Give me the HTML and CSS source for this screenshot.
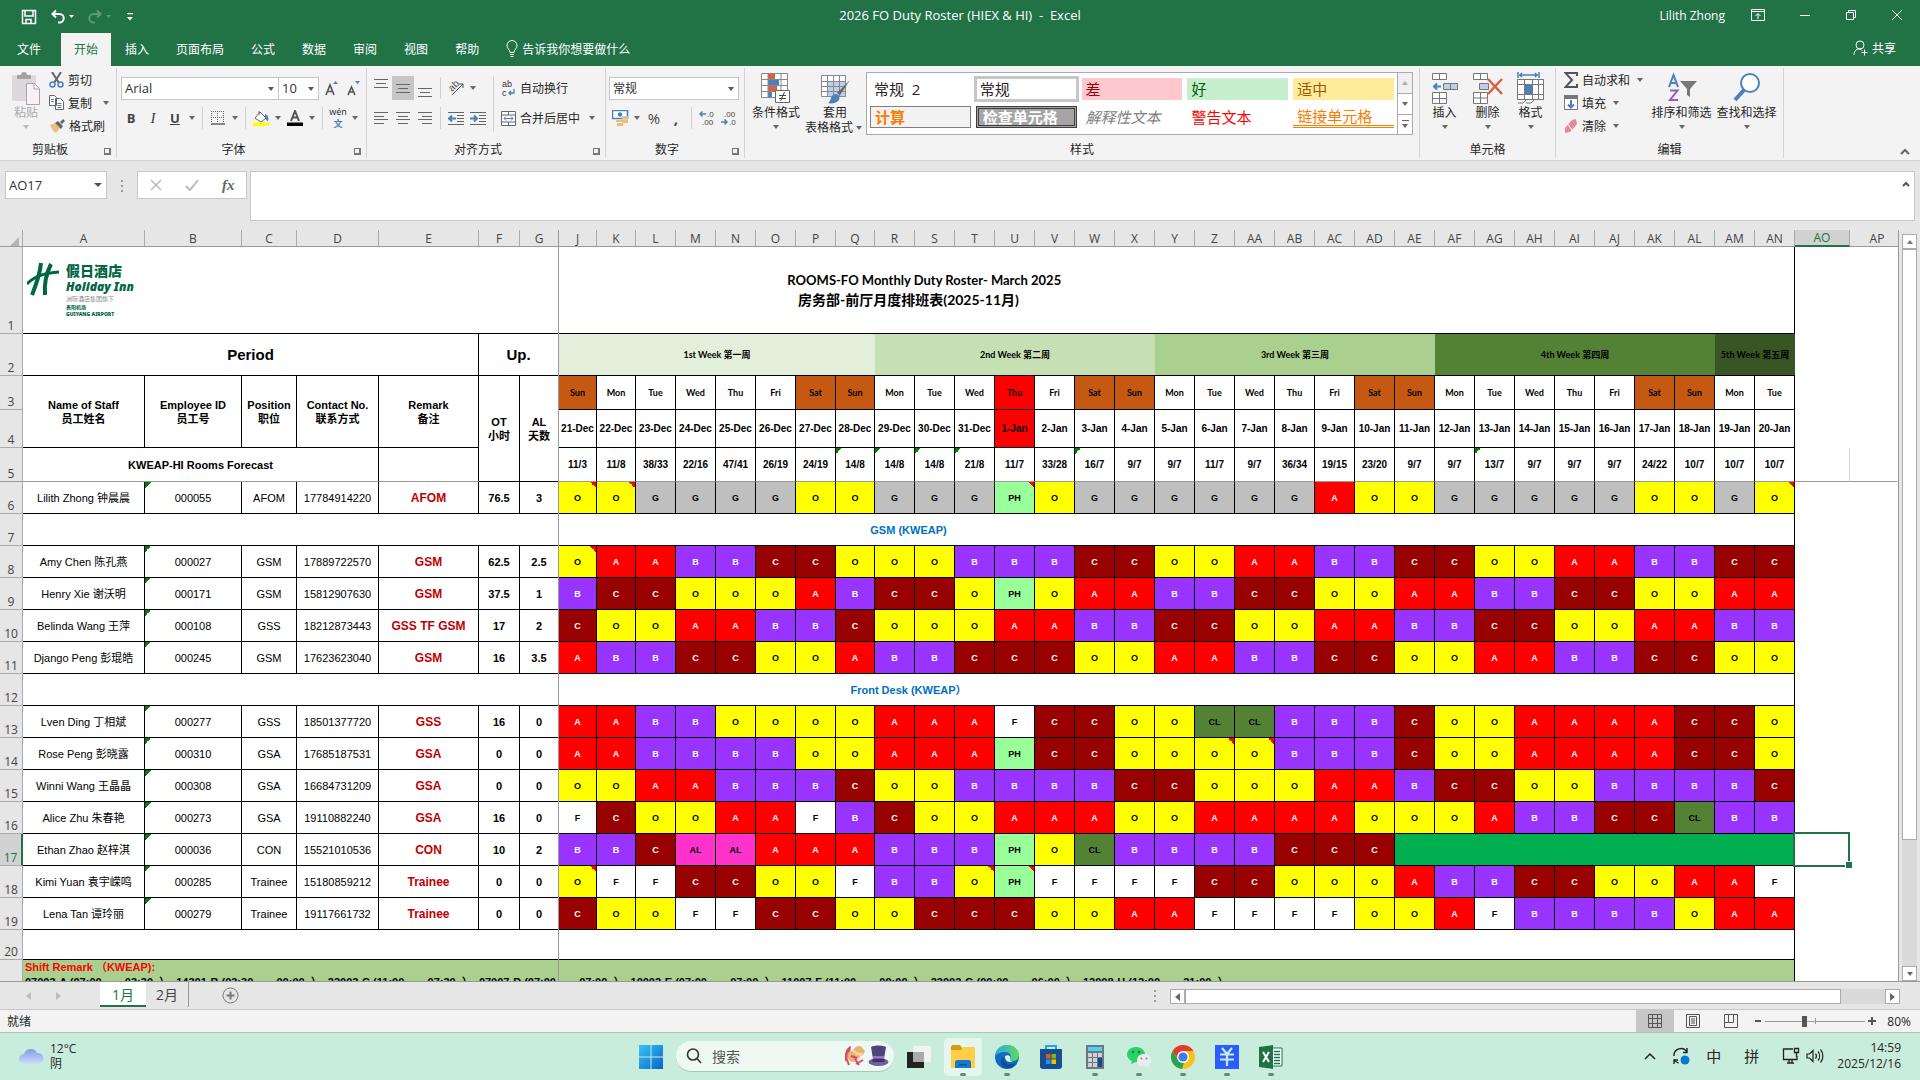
FILE: index.html
```html
<!DOCTYPE html>
<html lang="zh-CN">
<head>
    <meta charset="UTF-8">
    <meta name="viewport" content="width=device-width, initial-scale=1.0">
    <title>2026 FO Duty Roster (HIEX &amp; HI) - Excel</title>
    <link rel="stylesheet" href="styles.css">
</head>
<body>
    <!-- Title bar -->
    <header class="titlebar">
        <div class="quick">
            <button aria-label="保存"><svg width="16" height="16" viewBox="0 0 16 16" fill="none" stroke="#fff" stroke-width="1.5"><path d="M1.5 1.5h13v13h-13zM4 2v5h8V2M5 14v-3.5h5V14"/></svg></button>
            <button aria-label="撤消"><svg width="24" height="16" viewBox="0 0 24 16" fill="none" stroke="#fff" stroke-width="2"><path d="M6 1.500L2.500 5 6 8.500M3 5h6.500a4.200 4.200 0 0 1 0 8.500H8"/><path d="M19 6h5l-2.500 3z" fill="#fff" stroke="none"/></svg></button>
            <button aria-label="恢复"><svg width="24" height="16" viewBox="0 0 24 16" fill="none" stroke="#5b9a77" stroke-width="2"><path d="M10 1.500L13.500 5 10 8.500M13 5H6.500a4.200 4.200 0 0 0 0 8.500H8"/><path d="M19 6h5l-2.500 3z" fill="#5b9a77" stroke="none"/></svg></button>
            <button aria-label="自定义快速访问工具栏"><svg width="8" height="8" viewBox="0 0 8 8"><path d="M1 0h6v1.300H1zM1 4h6L4 7.500z" fill="#fff"/></svg></button>
        </div>
        <div class="doc-title">2026 FO Duty Roster (HIEX &amp; HI)&nbsp; -&nbsp; Excel</div>
        <div class="window-tools">
            <span>Lilith Zhong</span>
            <button aria-label="功能区显示选项"><svg width="14" height="12" viewBox="0 0 14 12" fill="none" stroke="#fff"><path d="M.5.5h13v11H.5zM.5 2.500h13M7 10V5M4.500 7L7 4.500 9.500 7"/></svg></button>
            <button aria-label="最小化"><svg width="12" height="12" viewBox="0 0 12 12" stroke="#fff"><path d="M1 6.500h10"/></svg></button>
            <button aria-label="还原"><svg width="12" height="12" viewBox="0 0 12 12" fill="none" stroke="#fff"><path d="M1.500 3.500h7v7h-7zM3.500 3V1.500h7v7H9"/></svg></button>
            <button aria-label="关闭"><svg width="12" height="12" viewBox="0 0 12 12" stroke="#fff"><path d="M1 1l10 10M11 1L1 11"/></svg></button>
        </div>
    </header>

    <nav class="tabs">
        <button>文件</button>
        <button class="active">开始</button>
        <button>插入</button>
        <button>页面布局</button>
        <button>公式</button>
        <button>数据</button>
        <button>审阅</button>
        <button>视图</button>
        <button>帮助</button>
        <button class="tell-me"><svg width="12" height="18" viewBox="0 0 12 18" fill="none" stroke="#fff"><path d="M4 12.500c0-3-3-3.500-3-7a5 5 0 0 1 10 0c0 3.500-3 4-3 7zM4 14.500h4M4.500 16.500h3"/></svg>告诉我你想要做什么</button>
        <button class="share"><svg width="15" height="16" viewBox="0 0 15 16" fill="none" stroke="#fff"><circle cx="7" cy="5" r="4"/><path d="M1 15c0-4 2.500-6 5-6 1.500 0 2.500.5 3 1.500M11.500 9.500v6M8.500 12.500h6"/></svg>共享</button>
    </nav>

    <!-- Ribbon -->
    <section class="ribbon">
        <div class="group clipboard">
            <div class="group-body">
                <button class="big disabled"><svg width="28" height="34" viewBox="0 0 28 34"><path d="M0 4h24v26H0z" fill="#dcd8dc"/><path d="M5 4h4a3 3 0 0 1 6 0h4v4H5z" fill="#a3a1a3"/><path d="M14.500 12.500h8l5 5v16h-13z" fill="#f8f2f8" stroke="#a8a4a8"/><path d="M22 13v5h5" fill="none" stroke="#a8a4a8"/></svg>粘贴<i class="caret"></i></button>
                <div class="stack">
                    <button><svg width="15" height="16" viewBox="0 0 15 16" fill="none"><path d="M3 0l7 11M12 0L5 11" stroke="#666" stroke-width="2"/><circle cx="3.500" cy="12.500" r="2.500" stroke="#4a80bd" stroke-width="1.500"/><circle cx="11.500" cy="12.500" r="2.500" stroke="#4a80bd" stroke-width="1.500"/></svg>剪切</button>
                    <button><svg width="15" height="15" viewBox="0 0 15 15" fill="#fff" stroke="#666"><path d="M.5.5h5l2 2v8h-7zM6.500 3.500h5l3 3v8h-8z"/><path d="M2 4.500h3M2 6.500h3M8.500 8.500h4M8.500 10.500h4M8.500 12.500h4" stroke="#4a80bd"/></svg>复制<i class="caret"></i></button>
                    <button><svg width="16" height="14" viewBox="0 0 16 14"><path d="M1 6l5-2 5 5-4 5c-2-1-4-3-6-8z" fill="#eabf7b"/><path d="M6 4l3-2 5 5-2 3zM11 3l3-3 2 2-3 3z" fill="#666"/></svg>格式刷</button>
                </div>
            </div>
            <div class="group-label">剪贴板<i class="launcher"></i></div>
        </div>

        <div class="group font">
            <div class="group-body rows">
                <div class="row">
                    <span class="drop font-name"><select aria-label="字体"><option>Arial</option></select></span><span class="drop font-size"><select aria-label="字号"><option>10</option></select></span>
                    <button class="ico grow" aria-label="增大字号"><svg width="14" height="16" viewBox="0 0 14 16"><path d="M1 15L5 5l4 10M2.500 11.500h5" fill="none" stroke="#555" stroke-width="1.600"/><path d="M8 4h5l-2.500-3z" fill="#4a80bd"/></svg></button>
                    <button class="ico" aria-label="减小字号"><svg width="14" height="16" viewBox="0 0 14 16"><path d="M1 15l3.500-8L8 15M2.500 12h4" fill="none" stroke="#555" stroke-width="1.600"/><path d="M8 1h5l-2.500 3z" fill="#4a80bd"/></svg></button>
                </div>
                <div class="row">
                    <button class="ico letter"><b>B</b></button>
                    <button class="ico letter serif"><i>I</i></button>
                    <button class="ico letter"><b><u>U</u></b></button><i class="caret"></i>
                    <span class="sep"></span>
                    <button class="ico" aria-label="边框"><svg width="14" height="14" viewBox="0 0 14 14" stroke="#666" fill="none"><path d="M.5 0v12M6.500 0v12M12.500 0v12M0 .5h13M0 6.500h13" stroke-dasharray="1 1"/><path d="M0 13h14" stroke-width="1.500"/></svg></button><i class="caret"></i>
                    <span class="sep"></span>
                    <button class="ico" aria-label="填充颜色"><svg width="16" height="16" viewBox="0 0 16 16"><path d="M7 2l6 6-5 4-6-4z" fill="#fff" stroke="#666"/><path d="M6 5V1" stroke="#666"/><path d="M12 4c3 1 4 4 3 7-2 0-2-3-3-4z" fill="#4a80bd"/><path d="M0 12.500h16V16H0z" fill="#ff0"/></svg></button><i class="caret"></i>
                    <button class="ico" aria-label="字体颜色"><svg width="16" height="16" viewBox="0 0 16 16"><path d="M4 11L8 1l4 10M5.500 7.500h5" fill="none" stroke="#555" stroke-width="2"/><path d="M0 12.500h16V16H0z"/></svg></button><i class="caret"></i>
                    <span class="sep"></span>
                    <button class="ico pinyin" aria-label="拼音"><span>wén</span><b>文</b></button><i class="caret"></i>
                </div>
            </div>
            <div class="group-label">字体<i class="launcher"></i></div>
        </div>

        <div class="group align">
            <div class="group-body">
                <div class="rows">
                    <div class="row">
                        <button class="ico" aria-label="顶端对齐"><svg width="14" height="20" viewBox="0 0 14 20" stroke="#666"><path d="M0 2.500h14M2 6.500h10M0 10.500h14" transform="translate(0 -1)"/></svg></button>
                        <button class="ico on" aria-label="垂直居中"><svg width="14" height="20" viewBox="0 0 14 20" stroke="#666"><path d="M0 6.500h14M2 10.500h10M0 14.500h14"/></svg></button>
                        <button class="ico" aria-label="底端对齐"><svg width="14" height="20" viewBox="0 0 14 20" stroke="#666"><path d="M0 10.500h14M2 14.500h10M0 18.500h14"/></svg></button>
                        <span class="sep"></span>
                        <button class="ico" aria-label="方向"><svg width="18" height="18" viewBox="0 0 18 18" fill="none" stroke="#555"><path d="M5 16L16 5M12 5h4v4"/><text x="0" y="0" transform="translate(5 13) rotate(-45)" font-size="10" fill="#555" stroke="none">ab</text></svg></button><i class="caret"></i>
                    </div>
                    <div class="row">
                        <button class="ico" aria-label="左对齐"><svg width="14" height="12" viewBox="0 0 14 12" stroke="#666"><path d="M0 .5h14M0 4.500h10M0 7.500h14M0 11.500h10"/></svg></button>
                        <button class="ico" aria-label="居中"><svg width="14" height="12" viewBox="0 0 14 12" stroke="#666"><path d="M0 .5h14M2 4.500h10M0 7.500h14M2 11.500h10"/></svg></button>
                        <button class="ico" aria-label="右对齐"><svg width="14" height="12" viewBox="0 0 14 12" stroke="#666"><path d="M0 .5h14M4 4.500h10M0 7.500h14M4 11.500h10"/></svg></button>
                        <span class="sep"></span>
                        <button class="ico" aria-label="减少缩进"><svg width="16" height="13" viewBox="0 0 16 13" fill="none" stroke="#666"><path d="M0 .5h16M9 3.500h7M9 6.500h7M9 9.500h7M0 12.500h16"/><path d="M8 6.500H1M4 3.500l-3 3 3 3" stroke="#4a80bd" stroke-width="2"/></svg></button>
                        <button class="ico" aria-label="增加缩进"><svg width="16" height="13" viewBox="0 0 16 13" fill="none" stroke="#666"><path d="M0 .5h16M9 3.500h7M9 6.500h7M9 9.500h7M0 12.500h16"/><path d="M0 6.500h7M4 3.500l3 3-3 3" stroke="#4a80bd" stroke-width="2"/></svg></button>
                    </div>
                </div>
                <span class="sep tall"></span>
                <div class="rows wrap">
                    <button><svg width="15" height="18" viewBox="0 0 15 18"><text x="1" y="8" font-size="9" fill="#333">ab</text><text x="1" y="17" font-size="9" fill="#333">c</text><path d="M13 10v4H8M10 12l-2 2 2 2" fill="none" stroke="#4a80bd" stroke-width="1.300"/></svg>自动换行</button>
                    <button><svg width="15" height="15" viewBox="0 0 15 15" fill="#fff" stroke="#666"><path d="M.5.5h14v14H.5zM.5 4h14M.5 11h14M7.500 0v4M7.500 11v4"/><path d="M3 7.500h9M5 5.500l-2 2 2 2M10 5.500l2 2-2 2" stroke="#4a80bd" fill="none"/></svg>合并后居中<i class="caret"></i></button>
                </div>
            </div>
            <div class="group-label">对齐方式<i class="launcher"></i></div>
        </div>

        <div class="group number">
            <div class="group-body rows">
                <div class="row"><span class="drop format"><select aria-label="数字格式"><option>常规</option></select></span></div>
                <div class="row">
                    <button class="ico" aria-label="会计数字格式"><svg width="17" height="16" viewBox="0 0 17 16"><path d="M.5.5h15v8H.5z" fill="#fff" stroke="#4a80bd" stroke-width="1.600"/><circle cx="8" cy="4.500" r="2.200" fill="#4a80bd"/><path d="M10 6h6v3h-6zM10 10h6v3h-6zM4 10h6v2H4zM5 13h6v3H5z" fill="#eabf7b"/></svg></button><i class="caret"></i>
                    <button class="ico letter big-sign">%</button>
                    <button class="ico letter big-sign"><b>,</b></button>
                    <span class="sep"></span>
                    <button class="ico" aria-label="增加小数位数"><svg width="16" height="16" viewBox="0 0 16 16"><path d="M7 4H1M3.500 1.500L1 4l2.500 2.500" fill="none" stroke="#4a80bd" stroke-width="1.500"/><text x="8" y="7" font-size="8" fill="#444">.0</text><text x="3" y="15" font-size="8" fill="#444">.00</text></svg></button>
                    <button class="ico" aria-label="减少小数位数"><svg width="16" height="16" viewBox="0 0 16 16"><path d="M0 12h6M3.500 9.500L6 12l-2.500 2.500" fill="none" stroke="#4a80bd" stroke-width="1.500"/><text x="3" y="7" font-size="8" fill="#444">.00</text><text x="8" y="15" font-size="8" fill="#444">.0</text></svg></button>
                </div>
            </div>
            <div class="group-label">数字<i class="launcher"></i></div>
        </div>

        <div class="group styles">
            <div class="group-body">
                <button class="big"><svg width="30" height="32" viewBox="0 0 30 32"><path d="M.5 1.500h26v24H.5z" fill="#fff"/><path d="M7 1h7v6H7zM7 13h9v6H7z" fill="#d9603f"/><path d="M7 7h11v6H7zM7 19h4v6H7z" fill="#4a80bd"/><path d="M.5 1.500h26v24H.5zM0 7.500h27M0 13.500h27M0 19.500h27M7 1v25M20 1v25" fill="none" stroke="#888"/><path d="M14.500 18.500h14v12h-14z" fill="#fff" stroke="#666"/><path d="M18 23.500h7M18 26.500h7M23.500 20l-4 9" stroke="#444"/></svg>条件格式<i class="caret"></i></button>
                <button class="big wide"><svg width="30" height="32" viewBox="0 0 30 32"><path d="M1.500 3.500h24v21h-24z" fill="#fff"/><path d="M7 9h18v15H7z" fill="#bcd0e8"/><path d="M1.500 3.500h24v21h-24zM1 9.500h25M1 14.500h25M1 19.500h25M7.500 3v22M13.500 3v22M19.500 3v22" fill="none" stroke="#888"/><path d="M30 8L20 23l-3-2z" fill="#666"/><path d="M13 23c4-3 8 1 6 5-2 3-7 4-11 3 3-2 2-5 5-8z" fill="#4a80bd"/></svg>套用<span>表格格式<i class="caret"></i></span></button>
                <div class="gallery">
                    <div class="gallery-grid">
                        <button>常规&nbsp; 2</button>
                        <button class="chosen">常规</button>
                        <button class="bad">差</button>
                        <button class="good">好</button>
                        <button class="neutral">适中</button>
                        <button class="calc">计算</button>
                        <button class="check">检查单元格</button>
                        <button class="explain">解释性文本</button>
                        <button class="warn">警告文本</button>
                        <button class="linked">链接单元格</button>
                    </div>
                    <div class="gallery-scroll">
                        <button class="off" aria-label="上一行"><i class="caret up"></i></button>
                        <button aria-label="下一行"><i class="caret"></i></button>
                        <button aria-label="其他"><i class="caret more"></i></button>
                    </div>
                </div>
            </div>
            <div class="group-label">样式</div>
        </div>

        <div class="group cells">
            <div class="group-body">
                <button class="big"><svg width="26" height="32" viewBox="0 0 26 32" fill="#fff" stroke="#777"><path d="M.5 1.500h14v6H.5zM7.500 1.500v6M.5 20.500h14v11H.5zM7.500 20.500v11M.5 26.500h14"/><path d="M11.500 11.500h14v6h-14zM18.500 11.500v6" fill="#bcd0e8"/><path d="M9 14.500H2M5 11.500l-3 3 3 3" fill="none" stroke="#4a80bd" stroke-width="2"/></svg>插入<i class="caret"></i></button>
                <button class="big"><svg width="30" height="32" viewBox="0 0 30 32" fill="#fff" stroke="#777"><path d="M.5 1.500h14v6H.5zM7.500 1.500v6M.5 20.500h14v11H.5zM7.500 20.500v11M.5 26h14"/><path d="M6.500 11.500h9v6h-9z" fill="#bcd0e8"/><path d="M15 7l14 15M29 7L15 22" stroke="#d9603f" stroke-width="2.500"/></svg>删除<i class="caret"></i></button>
                <button class="big"><svg width="28" height="32" viewBox="0 0 28 32" fill="none" stroke="#777"><path d="M.5 7.500h26v20H.5z" fill="#fff"/><path d="M7 13h8v10H7z" fill="#4a80bd" stroke="none"/><path d="M.5 7.500h26v20H.5zM0 12.500h27M0 22.500h27M7.500 7v21M15.500 7v21M21.500 7v21M1 31h5l3-3M9 31h5l3-3"/><path d="M1 0v6M22 0v6M2 3h19M5 1L3 3l2 2M18 1l2 2-2 2" stroke="#4a80bd" stroke-width="1.500"/></svg>格式<i class="caret"></i></button>
            </div>
            <div class="group-label">单元格</div>
        </div>

        <div class="group editing">
            <div class="group-body">
                <div class="stack">
                    <button><svg width="14" height="16" viewBox="0 0 14 16"><path d="M13 4V1H1.500L8 8l-6.500 7H13v-3" fill="none" stroke="#555" stroke-width="2"/></svg>自动求和<i class="caret"></i></button>
                    <button><svg width="14" height="15" viewBox="0 0 14 15"><path d="M.5.5h13v14H.5z" fill="#fff" stroke="#777"/><path d="M0 0h14v4H0z" fill="#777"/><path d="M7 5v7M4 9.500l3 3 3-3" fill="none" stroke="#4a80bd" stroke-width="2"/></svg>填充<i class="caret"></i></button>
                    <button><svg width="14" height="14" viewBox="0 0 14 14"><path d="M8 1l4-1 1 5-7 8-5 1V9z" fill="#e8889a"/><path d="M4 5.500L8 11" stroke="#fff"/></svg>清除<i class="caret"></i></button>
                </div>
                <button class="big"><svg width="30" height="32" viewBox="0 0 30 32"><path d="M2 15L6.500 3 11 15M3.500 11h6" fill="none" stroke="#4a80bd" stroke-width="2"/><path d="M3 18.500h7.500L3 28h8" fill="none" stroke="#9b59b6" stroke-width="2"/><path d="M13 9h17l-7 8v8l-3-2v-6z" fill="#777"/></svg>排序和筛选<i class="caret"></i></button>
                <button class="big"><svg width="28" height="32" viewBox="0 0 28 32"><circle cx="17" cy="11" r="9" fill="#fff" stroke="#4a80bd" stroke-width="2"/><path d="M11 18L2 28" stroke="#4a80bd" stroke-width="4"/></svg>查找和选择<i class="caret"></i></button>
            </div>
            <div class="group-label">编辑</div>
        </div>
        <button class="collapse" aria-label="折叠功能区"><svg width="10" height="7" viewBox="0 0 10 7" fill="none" stroke="#666" stroke-width="2"><path d="M1 6l4-4 4 4"/></svg></button>
    </section>

    <!-- Formula bar -->
    <section class="formula-bar">
        <span class="drop name-box"><input type="text" value="AO17" aria-label="名称框"></span>
        <i class="dots"></i>
        <div class="formula-buttons">
            <button aria-label="取消"><svg width="12" height="12" viewBox="0 0 12 12" stroke="#bbb" stroke-width="1.500"><path d="M1 1l10 10M11 1L1 11"/></svg></button>
            <button aria-label="输入"><svg width="14" height="12" viewBox="0 0 14 12" fill="none" stroke="#bbb" stroke-width="2"><path d="M1 7l4 4 8-10"/></svg></button>
            <button class="fx" aria-label="插入函数"><i>fx</i></button>
        </div>
        <div class="formula-box">
            <input type="text" aria-label="编辑栏">
            <svg width="8" height="6" viewBox="0 0 8 6" fill="none" stroke="#555" stroke-width="2"><path d="M1 5l3-3 3 3"/></svg>
        </div>
    </section>

    <!-- Worksheet -->
    <main class="workspace">
        <div class="sheet">
            <table>
                <colgroup id="cols"></colgroup>
                <thead>
                    <tr class="letters" id="letters"></tr>
                </thead>
                <tbody>
                    <tr class="r1">
                        <th>1</th>
                        <td colspan="38" class="title">
                            <div class="logo">
                                <svg width="32" height="34" viewBox="0 0 32 34" fill="none" stroke="#006643"><path d="M14 1C13 12 9 23 5 33M24 2c-5 10-7 19-6 31" stroke-width="4"/><path d="M0 22c7-8 17-11 32-12" stroke-width="3"/></svg>
                                <div>
                                    <b class="cn">假日酒店</b>
                                    <b class="en">Holiday Inn</b>
                                    <span class="sub">洲际酒店集团旗下</span>
                                    <span class="city">贵阳机场</span>
                                    <b class="city">GUIYANG AIRPORT</b>
                                </div>
                            </div>
                            <div>&nbsp; &nbsp; &nbsp; &nbsp; &nbsp; ROOMS-FO Monthly Duty Roster- March 2025</div>
                            <div class="title-cn">房务部-前厅月度排班表(2025-11月)</div>
                        </td>
                        <td class="out"></td><td class="out"></td>
                    </tr>
                    <tr class="r2">
                        <th>2</th>
                        <td colspan="5" class="period">Period</td>
                        <td colspan="2" class="period">Up.</td>
                        <td colspan="8" class="week w1">1st Week 第一周</td>
                        <td colspan="7" class="week w2">2nd Week 第二周</td>
                        <td colspan="7" class="week w3">3rd Week 第三周</td>
                        <td colspan="7" class="week w4">4th Week 第四周</td>
                        <td colspan="2" class="week w5">5th Week 第五周</td>
                        <td class="out"></td><td class="out"></td>
                    </tr>
                    <tr class="r3" id="days">
                        <th>3</th>
                        <td rowspan="2" class="head">Name of Staff<br>员工姓名</td>
                        <td rowspan="2" class="head">Employee ID<br>员工号</td>
                        <td rowspan="2" class="head">Position<br>职位</td>
                        <td rowspan="2" class="head">Contact No.<br>联系方式</td>
                        <td rowspan="2" class="head">Remark<br>备注</td>
                        <td rowspan="3" class="head">OT<br>小时</td>
                        <td rowspan="3" class="head">AL<br>天数</td>
                    </tr>
                    <tr class="r4" id="dates"><th>4</th></tr>
                    <tr class="r5" id="forecast">
                        <th>5</th>
                        <td colspan="4" class="head">KWEAP-HI Rooms Forecast</td>
                        <td></td>
                    </tr>
                </tbody>
                <tbody id="staff"></tbody>
                <tbody>
                    <tr class="r20">
                        <th>20</th>
                        <td colspan="38"></td>
                        <td class="out"></td><td class="out"></td>
                    </tr>
                    <tr class="r21">
                        <th></th>
                        <td colspan="38" class="remark"><span>Shift Remark （KWEAP):</span><br>07003-A (07:00&nbsp; — &nbsp;03:30&nbsp; ）&nbsp; 14301-B (03:30&nbsp; — &nbsp;00:00&nbsp; ）&nbsp; 23003-C (11:00&nbsp; — &nbsp;07:30&nbsp; ）&nbsp; 07007-D (07:00&nbsp; — &nbsp;07:00&nbsp; ）&nbsp; 10002-E (07:00&nbsp; — &nbsp;07:00&nbsp; ）&nbsp; 11007-F (11:00&nbsp; — &nbsp;09:00&nbsp; ）&nbsp; 22002-G (00:00&nbsp; — &nbsp;06:00&nbsp; ）&nbsp; 12008-H (12:00&nbsp; — &nbsp;21:00&nbsp; ）</td>
                        <td class="out"></td><td class="out"></td>
                    </tr>
                </tbody>
            </table>
            <i class="freeze"></i>
        </div>
        <div class="vscroll">
            <button aria-label="向上滚动"><i class="caret up"></i></button>
            <div class="thumb"></div>
            <div class="track"></div>
            <button aria-label="向下滚动"><i class="caret"></i></button>
        </div>
    </main>

    <section class="sheet-tabs">
        <button class="nav" aria-label="上一张"><svg width="6" height="8" viewBox="0 0 6 8"><path d="M5 0v8L0 4z" fill="#bbb"/></svg></button>
        <button class="nav" aria-label="下一张"><svg width="6" height="8" viewBox="0 0 6 8"><path d="M1 0v8l5-4z" fill="#bbb"/></svg></button>
        <button class="tab active">1月</button>
        <button class="tab">2月</button>
        <button class="add" aria-label="新工作表"><svg width="17" height="17" viewBox="0 0 17 17" fill="none" stroke="#777"><circle cx="8.500" cy="8.500" r="7.500"/><path d="M8.500 4.500v8M4.500 8.500h8" stroke-width="2"/></svg></button>
        <i class="dots"></i>
        <div class="hscroll">
            <button aria-label="向左滚动"><i class="caret left"></i></button>
            <div class="thumb"></div>
            <div class="track"></div>
            <button aria-label="向右滚动"><i class="caret right"></i></button>
        </div>
    </section>

    <section class="status">
        <span class="ready">就绪</span>
        <button class="view on" aria-label="普通"><svg width="14" height="14" viewBox="0 0 14 14" fill="none" stroke="#555"><path d="M.5.5h13v13H.5zM.5 4.500h13M.5 9.500h13M4.500 0v14M9.500 0v14"/></svg></button>
        <button class="view" aria-label="页面布局"><svg width="14" height="14" viewBox="0 0 14 14" fill="none" stroke="#555"><path d="M.5.5h13v13H.5zM3.500 2.500h7v9h-7zM5 5h4M5 7h4M5 9h4"/></svg></button>
        <button class="view" aria-label="分页预览"><svg width="14" height="14" viewBox="0 0 14 14" fill="none" stroke="#555"><path d="M.5.5h13v13H.5zM4.500 0v8.500h5V0M4.500 8.500H.5"/></svg></button>
        <button class="zoom-btn" aria-label="缩小"><svg width="8" height="8" viewBox="0 0 8 8"><path d="M1 3h6v2H1z" fill="#555"/></svg></button>
        <input type="range" min="0" max="100" value="39" aria-label="缩放">
        <button class="zoom-btn" aria-label="放大"><svg width="8" height="8" viewBox="0 0 8 8"><path d="M0 3h3V0h2v3h3v2H5v3H3V5H0z" fill="#555"/></svg></button>
        <span class="percent">80%</span>
    </section>

    <!-- Windows taskbar -->
    <footer class="taskbar">
        <div class="weather">
            <svg width="26" height="18" viewBox="0 0 26 18"><defs><linearGradient id="cl" x1="0" y1="0" x2="0" y2="1"><stop offset="0" stop-color="#7d9fe8"/><stop offset="1" stop-color="#cfdcfa"/></linearGradient></defs><path d="M6 17a5 5 0 0 1 0-10 7 7 0 0 1 13-1 5.500 5.500 0 0 1 2 11z" fill="url(#cl)"/></svg>
            <div>12°C<br>阴</div>
        </div>
        <div class="apps">
            <button class="start" aria-label="开始"><svg width="24" height="24" viewBox="0 0 24 24"><defs><linearGradient id="win" x1="0" y1="0" x2="1" y2="1"><stop offset="0" stop-color="#3cc3f8"/><stop offset="1" stop-color="#0566c8"/></linearGradient></defs><path d="M0 0h11.500v11.500H0zM12.500 0H24v11.500H12.500zM0 12.500h11.500V24H0zM12.500 12.500H24V24H12.500z" fill="url(#win)"/></svg></button>
            <label class="search">
                <svg width="16" height="16" viewBox="0 0 16 16" fill="none" stroke="#333" stroke-width="1.600"><circle cx="7" cy="6.500" r="5.500"/><path d="M11 10.500l4 4.500"/></svg>
                <input type="text" placeholder="搜索">
                <svg width="46" height="22" viewBox="0 0 46 22"><path d="M2 10c0-3 2-8 6-9l-1 7-5 9z" fill="#d9486a"/><path d="M5 8c2-2 4-1 6-4 2-4 8-4 9 0 3 1 2 5-2 7-3 2-4 6-8 6-4 0-7-5-5-9z" fill="#e9b174"/><path d="M10 4c3 3 6 4 10 4l-1 3c-4 0-8-2-10-5z" fill="#f5d4a3"/><path d="M8 11l6 2M3 12l3 8M12 14l4 6M20 15l-7 4" stroke="#d9486a" stroke-width="2" fill="none"/><path d="M28 2c4-2 11-2 15 0l-2 12H30z" fill="#50447c"/><path d="M30 11h11v3H30z" fill="#a66bd0"/><ellipse cx="35.500" cy="17" rx="10" ry="4" fill="#6f619c"/><path d="M29.500 14h12v3h-12z" fill="#3d3364"/></svg>
            </label>
            <button aria-label="任务视图"><svg width="24" height="24" viewBox="0 0 24 24"><path d="M0 7h17v16H0z" fill="#222"/><path d="M6 1h18v16H6z" fill="#f2f2f2"/><path d="M6 7h11v10H6z" fill="#aaa"/></svg></button>
            <button class="open hot" aria-label="文件资源管理器"><svg width="24" height="24" viewBox="0 0 24 24"><path d="M0 2c0-1 1-2 2-2h7l2 3v4H0z" fill="#d69a0a"/><path d="M0 5h10l2-3h12v21H0z" fill="#ffcf48"/><path d="M4 23v-6c0-1 1-2 2-2h12c1 0 2 1 2 2v6z" fill="#1378cf"/><path d="M8 19h8v1.500H8z" fill="#0b4f94"/></svg></button>
            <button class="open" aria-label="Edge"><svg width="24" height="24" viewBox="0 0 24 24"><defs><linearGradient id="ed" x1="0" y1="0" x2="1" y2="0"><stop offset="0" stop-color="#2ba7e8"/><stop offset="1" stop-color="#5fdc58"/></linearGradient></defs><circle cx="12" cy="12" r="12" fill="#0f6cc4"/><path d="M0 11C1 4 6 0 12 0c7 0 12 5 12 10 0 4-3 6-6 6-2 0-4-1-3-3 2-4-2-6-5-6-5 0-9 3-10 4z" fill="url(#ed)"/><path d="M9 12c-1 6 5 9 12 6-3 5-8 6-11 5-5-2-6-8-1-11z" fill="#134c94"/><path d="M10 11c3-2 6 0 5 2-1 2 1 3 3 3-3 2-8 1-8-5z" fill="#dff3ea"/></svg></button>
            <button aria-label="Microsoft Store"><svg width="24" height="24" viewBox="0 0 24 24"><path d="M7 5V1h10v4" fill="none" stroke="#20a6e8" stroke-width="2"/><path d="M1 4h22v17c0 2-1 3-3 3H4c-2 0-3-1-3-3z" fill="#174e90"/><path d="M7 9h4.500v4.500H7z" fill="#f25022"/><path d="M12.500 9H17v4.500h-4.500z" fill="#7fba00"/><path d="M7 14.500h4.500V19H7z" fill="#00a4ef"/><path d="M12.500 14.500H17V19h-4.500z" fill="#ffb900"/></svg></button>
            <button class="open" aria-label="计算器"><svg width="18" height="24" viewBox="0 0 18 24"><path d="M0 0h18v24H0z" fill="#6d7782"/><path d="M2 2h14v4H2z" fill="#4fd0f5"/><path d="M2 8h4v4H2zM7 8h4v4H7zM12 8h4v4h-4zM2 13h4v4H2zM7 13h4v4H7zM2 18h4v4H2zM7 18h4v4H7z" fill="#ccd2d8"/><path d="M12 13h4v9h-4z" fill="#0f4c8c"/></svg></button>
            <button class="open" aria-label="微信"><svg width="24" height="24" viewBox="0 0 24 24"><path d="M9 2c5 0 9 3 9 7.500S14 17 9 17l-5 2 1-3c-3-1-5-4-5-6.500C0 5 4 2 9 2z" fill="#28d268"/><circle cx="6" cy="7" r="1.200" fill="#0f7a3a"/><circle cx="12" cy="7" r="1.200" fill="#0f7a3a"/><path d="M17 9c4 0 7 3 7 6.500 0 2-1 4-3 5l1 3-3-2c-6 1-9-2-9-6S13 9 17 9z" fill="#ececec"/><circle cx="14.500" cy="13.500" r="1" fill="#888"/><circle cx="19.500" cy="13.500" r="1" fill="#888"/></svg></button>
            <button class="open" aria-label="Chrome"><svg width="24" height="24" viewBox="0 0 24 24"><circle cx="12" cy="12" r="12" fill="#fbc116"/><path d="M1.600 6A12 12 0 0 1 22.400 6H12L7 14.500z" fill="#e33b2e"/><path d="M1.600 6L7 15l6 2.500L11 24A12 12 0 0 1 1.600 6z" fill="#2ba24c"/><circle cx="12" cy="12" r="6" fill="#fff"/><circle cx="12" cy="12" r="4.600" fill="#3b7ded"/></svg></button>
            <button class="open" aria-label="收银"><svg width="24" height="24" viewBox="0 0 24 24"><path d="M0 0h24v24H0z" fill="#2a5cff"/><path d="M7 3l5 6 5-6M5 9.500h14M5 14.500h14M12 9v12" fill="none" stroke="#c9eddd" stroke-width="2.200"/></svg></button>
            <button class="open" aria-label="Excel"><svg width="24" height="24" viewBox="0 0 24 24"><path d="M13 3h10v18H13z" fill="#fff" stroke="#1f7246"/><path d="M15 6.500h6M15 9.500h6M15 12.500h6M15 15.500h6M15 18.500h6" stroke="#1f7246" stroke-width="1.600"/><path d="M0 2l14-2v24L0 22z" fill="#1f7246"/><path d="M4 7l6 10M10 7L4 17" stroke="#fff" stroke-width="2"/></svg></button>
        </div>
        <div class="tray">
            <svg width="12" height="8" viewBox="0 0 12 8" fill="none" stroke="#222" stroke-width="1.500"><path d="M1 7l5-5 5 5"/></svg>
            <svg width="18" height="18" viewBox="0 0 18 18" fill="none" stroke="#222" stroke-width="1.400"><path d="M2 9a7 7 0 0 1 13-4M15 1v4.500h-4M2 17v-4h4M2.500 13a7 7 0 0 0 4 3"/><circle cx="13" cy="13" r="4.500" fill="#0a78d7" stroke="none"/></svg>
            <span>中</span>
            <span>拼</span>
            <svg width="18" height="18" viewBox="0 0 18 18" fill="none" stroke="#222" stroke-width="1.300"><path d="M11 2H1.500v10.500H15V9M5 16h7M7 12.500V16M10 12.500V16M12.500 1.500h4v4h-4zM14.500 6v4"/></svg>
            <svg class="volume" width="18" height="16" viewBox="0 0 18 16" fill="none" stroke="#222" stroke-width="1.200"><path d="M1 6v4h2.500L7 13.500v-11L3.500 6zM9.500 5.500a4 4 0 0 1 0 5M12 3.500a7 7 0 0 1 0 9M14.500 1.500a10 10 0 0 1 0 13"/></svg>
            <div class="clock">14:59<br>2025/12/16</div>
        </div>
    </footer>

    <script src="script.js"></script>
</body>
</html>
```
FILE: styles.css
```css
/* General Styles */
* {
    box-sizing: border-box;
}

body {
    margin: 0;
    height: 100vh;
    display: flex;
    flex-direction: column;
    overflow: hidden;
    background-color: #e6e6e6;
    color: #262626;
    font-family: "Open Sans", "Noto Sans CJK SC", sans-serif;
    font-size: 12px;
}

button, input, select {
    margin: 0;
    padding: 0;
    border: none;
    background: none;
    color: inherit;
    font: inherit;
}

button {
    display: flex;
    align-items: center;
    justify-content: center;
    white-space: nowrap;
}

svg {
    flex: none;
}

svg text {
    font-family: "Liberation Sans", sans-serif;
}

/* Drop arrows */
.caret {
    flex: none;
    width: 12px;
    height: 4px;
    display: flex;
    justify-content: center;
}

.caret::before {
    content: "";
    border: 3px solid transparent;
    border-top: 4px solid #666;
    border-bottom: none;
}

.caret.up::before {
    border-top: none;
    border-bottom: 4px solid #777;
}

.caret.left::before, .caret.right::before {
    border: 4px solid transparent;
    border-left: none;
    border-right: 5px solid #666;
}

.caret.right::before {
    border-right: none;
    border-left: 5px solid #666;
}

.caret.left, .caret.right {
    height: 8px;
}

.caret.more {
    height: 8px;
    padding-top: 4px;
    background: linear-gradient(#666, #666) center top / 7px 1px no-repeat;
}

/* Title Bar */
.titlebar {
    flex: none;
    height: 33px;
    display: grid;
    grid-template-columns: 1fr auto 1fr;
    align-items: center;
    background-color: #217346;
    color: #fff;
}

.quick {
    display: flex;
    align-items: center;
    gap: 12px;
    padding-left: 21px;
}

.quick button + button {
    margin-left: 1px;
}

.quick button:last-child {
    margin-left: 3px;
}

.doc-title {
    padding-bottom: 4px;
    font-size: 13px;
}

.window-tools {
    display: flex;
    align-items: center;
    justify-content: flex-end;
    padding-right: 17px;
    padding-bottom: 3px;
}

.window-tools button {
    margin-left: 34px;
}

.window-tools span + button {
    margin-left: 26px;
}

/* Ribbon Tabs */
.tabs {
    flex: none;
    height: 33px;
    display: flex;
    gap: 1px;
    padding-left: 4px;
    background-color: #217346;
    color: #fff;
}

.tabs button {
    padding: 0 13px 2px;
}

.tabs button:first-child {
    margin-right: 6px;
}

.tabs .active {
    background-color: #f3f3f3;
    color: #217346;
}

.tabs .tell-me {
    gap: 4px;
}

.tabs .share {
    gap: 4px;
    margin-left: auto;
    padding-right: 24px;
    padding-bottom: 4px;
}

/* Ribbon */
.ribbon {
    flex: none;
    height: 95px;
    display: flex;
    padding: 2px 0;
    background-color: #f3f3f3;
    border-bottom: 1px solid #d0d0d0;
}

.group {
    flex: none;
    display: flex;
    flex-direction: column;
    border-right: 1px solid #d5d5d5;
}

.clipboard { width: 117px; }
.font { width: 250px; }
.align { width: 239px; }
.number { width: 139px; }
.styles { width: 675px; }
.cells { width: 136px; }
.editing { width: 228px; }

.group-body {
    height: 74px;
    display: flex;
    padding-left: 3px;
}

.group-label {
    position: relative;
    height: 16px;
    text-align: center;
    line-height: 16px;
}

.clipboard .group-label,
.font .group-label,
.align .group-label,
.number .group-label {
    padding-right: 16px;
}

.launcher {
    position: absolute;
    right: 5px;
    top: 6px;
    width: 7px;
    height: 7px;
    border-top: 1px solid #777;
    border-left: 1px solid #777;
}

.launcher::after {
    content: "";
    position: absolute;
    right: 0;
    bottom: 0;
    width: 4px;
    height: 4px;
    border-right: 2px solid #777;
    border-bottom: 2px solid #777;
}

.stack {
    display: flex;
    flex-direction: column;
}

.stack button {
    height: 23px;
    gap: 4px;
    justify-content: flex-start;
}

.rows {
    display: flex;
    flex-direction: column;
    gap: 6px;
    padding-top: 8px;
}

.row {
    height: 24px;
    display: flex;
    align-items: center;
}

.ico {
    width: 22px;
    height: 24px;
}

.ico.on {
    background-color: #c6c6c6;
}

.sep {
    flex: none;
    width: 1px;
    height: 22px;
    margin: 0 4px;
    background-color: #d2d2d2;
}

.sep.tall {
    height: 56px;
    margin-top: 8px;
}

.letter {
    color: #444;
    font-size: 13px;
}

.serif {
    font-family: "Liberation Serif", serif;
    font-size: 15px;
}

.big-sign {
    font-size: 15px;
}

.pinyin {
    flex-direction: column;
    font-size: 9px;
    line-height: 12px;
}

.pinyin b {
    color: #4a80bd;
}

.big {
    flex-direction: column;
    justify-content: flex-start;
    width: 43px;
    padding-top: 3px;
    line-height: 15px;
}

.big svg {
    height: 34px;
}

.big > .caret {
    margin-top: 5px;
}

.big span {
    display: flex;
    align-items: center;
}

.disabled {
    color: #aaa;
}

.disabled .caret {
    opacity: 0.4;
}

.clipboard .big {
    width: 46px;
}

.clipboard .stack .caret {
    margin-left: 4px;
}

/* Drop-downs */
.drop {
    position: relative;
    display: flex;
    height: 23px;
    background-color: #fff;
    border: 1px solid #c6c6c6;
}

.drop::after {
    content: "";
    position: absolute;
    right: 4px;
    top: 9px;
    border: 3px solid transparent;
    border-top: 4px solid #555;
    border-bottom: none;
}

.drop select, .drop input {
    appearance: none;
    width: 100%;
    padding-left: 3px;
    color: #333;
    outline: none;
}

.font .row:first-child {
    padding-left: 1px;
}

.font-name {
    width: 158px;
}

.font-size {
    width: 40px;
    border-left: none;
}

.grow {
    margin-left: 2px;
}

.format {
    width: 130px;
}

.font-name, .font-size, .name-box {
    font-size: 13px;
}

.wrap button {
    height: 24px;
    gap: 4px;
    justify-content: flex-start;
    padding-left: 3px;
}

.wrap .caret {
    margin-left: 2px;
}

/* Style Gallery */
.styles .big {
    width: 56px;
}

.styles .wide {
    width: 62px;
}

.gallery {
    display: flex;
    width: 547px;
    height: 63px;
    margin-top: 4px;
    background-color: #fff;
    border: 1px solid #ababab;
}

.gallery-grid {
    flex: 1;
    display: grid;
    grid-template-columns: repeat(5, 1fr);
    grid-template-rows: 22px 22px;
    gap: 6px 5px;
    padding: 5px 3px;
}

.gallery-grid button {
    justify-content: flex-start;
    padding-left: 4px;
    font-size: 15px;
    line-height: 20px;
}

.gallery-grid .chosen {
    outline: 3px solid #c6c6c6;
    outline-offset: -1px;
}

.gallery-grid .bad { background-color: #ffc7ce; color: #9c0006; }
.gallery-grid .good { background-color: #c6efce; color: #006100; }
.gallery-grid .neutral { background-color: #ffeb9c; color: #9c5700; }
.gallery-grid .explain { color: #7f7f7f; font-style: italic; }
.gallery-grid .warn { color: #f00; }

.gallery-grid .calc {
    background-color: #f2f2f2;
    border: 1px solid #7f7f7f;
    color: #fa7d00;
    font-weight: bold;
}

.gallery-grid .check {
    background-color: #a5a5a5;
    border: 3px double #3f3f3f;
    color: #fff;
    font-weight: bold;
}

.gallery-grid .linked {
    border-bottom: 3px double #ff8001;
    color: #fa7d00;
}

.gallery-scroll {
    width: 15px;
    display: grid;
    grid-template-rows: repeat(3, 1fr);
    border-left: 1px solid #ababab;
}

.gallery-scroll button + button {
    border-top: 1px solid #ababab;
}

.gallery-scroll .off {
    background-color: #e6e6e6;
    opacity: 0.6;
}

.editing .stack {
    width: 90px;
    padding-left: 5px;
}

.editing .big {
    width: 65px;
}

.collapse {
    align-self: flex-end;
    margin-left: auto;
    padding: 0 10px 3px 0;
}

/* Formula Bar */
.formula-bar {
    flex: none;
    display: flex;
    align-items: flex-start;
    padding: 10px 5px 9px;
}

.name-box {
    width: 102px;
    height: 28px;
}

.name-box::after {
    top: 11px;
    border-width: 4px 4px 0;
}

.dots {
    width: 2px;
    height: 12px;
    margin: 9px 14px 0;
    background: repeating-linear-gradient(#999 0 2px, transparent 2px 5px);
}

.formula-buttons {
    width: 110px;
    height: 28px;
    display: flex;
    justify-content: space-around;
    margin-right: 3px;
    background-color: #fff;
    border: 1px solid #c6c6c6;
}

.fx {
    color: #666;
    font-family: "Liberation Serif", serif;
    font-size: 15px;
    font-weight: bold;
}

.formula-box {
    flex: 1;
    height: 50px;
    display: flex;
    align-items: flex-start;
    padding: 9px 4px 0 4px;
    background-color: #fff;
    border: 1px solid #c6c6c6;
}

.formula-box input {
    flex: 1;
    outline: none;
}

/* Worksheet */
.workspace {
    flex: 1;
    min-height: 0;
    display: flex;
    border-bottom: 1px solid #999;
}

.sheet {
    position: relative;
    flex: 1;
    overflow: hidden;
    border-right: 1px solid #999;
}

table {
    width: 100%;
    table-layout: fixed;
    border-collapse: separate;
    border-spacing: 0;
    background-color: #fff;
    color: #000;
    font-family: "Liberation Sans", "Noto Sans CJK SC", sans-serif;
    font-size: 11px;
}

td, th {
    padding: 0;
    border-right: 1px solid #000;
    border-bottom: 1px solid #000;
    text-align: center;
    white-space: nowrap;
    line-height: 14px;
    overflow: hidden;
}

th {
    background-color: #e6e6e6;
    border-color: #ababab;
    color: #444;
    font-family: "Open Sans", sans-serif;
    font-size: 12px;
    font-weight: normal;
    vertical-align: bottom;
}

.letters th {
    height: 17px;
    line-height: 15px;
    border-bottom-color: #999;
}

th.picked {
    background-color: #d2d2d2;
    color: #217346;
}

.letters .picked {
    border-bottom: 2px solid #217346;
}

.selected-row .picked {
    border-right: 2px solid #217346;
}

.letters .corner::after {
    content: "";
    float: right;
    margin: 3px 3px 0 0;
    border-left: 9px solid transparent;
    border-bottom: 9px solid #b5b5b5;
}

.letters .last {
    padding-left: 6px;
    border-right: none;
}

.r1 { height: 87px; }
.r2 { height: 42px; }
.r3 { height: 34px; }
.r4 { height: 38px; }
.r5 { height: 34px; }
.line { height: 32px; }
.r20 { height: 30px; }
.r21 { height: 40px; }

td.out {
    border-color: transparent;
}

.r5 td.out {
    border-right-color: #d4d4d4;
}

.r5 td.out:last-child {
    border-right-color: transparent;
}

.r5 td, .r5 th, .r5 td.out {
    border-bottom-color: #999;
}

/* Title row with the hotel logo floating over it */
.title {
    position: relative;
    font-family: Lato, "Noto Sans CJK SC", sans-serif;
    font-size: 13px;
    font-weight: bold;
    line-height: 20px;
}

.title-cn {
    font-size: 14px;
}

.logo {
    position: absolute;
    left: 4px;
    top: 15px;
    display: flex;
    gap: 7px;
    color: #006643;
    text-align: left;
}

.logo div {
    display: flex;
    flex-direction: column;
    font-family: "Noto Sans", "Noto Sans CJK SC", sans-serif;
}

.logo .cn {
    font-size: 14px;
    line-height: 17px;
}

.logo .en {
    font-size: 12px;
    line-height: 15px;
    font-style: italic;
}

.logo .sub {
    color: #888;
    font-size: 6px;
    font-weight: normal;
    line-height: 10px;
}

.logo .city {
    font-size: 5px;
    line-height: 7px;
}

.period {
    font-size: 15px;
    font-weight: bold;
}

.week {
    border-right: none;
    font-family: Lato, "Noto Sans CJK SC", sans-serif;
    font-size: 9px;
    font-weight: bold;
}

.w1 { background-color: #e2efda; }
.w2 { background-color: #c6e0b4; }
.w3 { background-color: #a9d08e; }
.w4 { background-color: #548235; }
.w5 { background-color: #375623; }

.head {
    font-weight: bold;
}

.day {
    font-family: Lato, sans-serif;
    font-size: 9px;
    font-weight: bold;
}

.weekend {
    background-color: #c65911;
}

.holiday {
    background-color: #f00;
}

.date, .rooms {
    font-size: 10px;
    font-weight: bold;
}

.shift {
    font-size: 9px;
    font-weight: bold;
}

.role {
    color: #c00000;
    font-size: 12px;
    font-weight: bold;
}

.hours {
    font-weight: bold;
}

.team {
    color: #0070c0;
    font-weight: bold;
}

/* Shift codes */
.O { background-color: #ff0; }
.A { background-color: #f00; color: #fff; }
.B { background-color: #9933ff; color: #fff; }
.C { background-color: #990000; color: #fff; }
.G { background-color: #bfbfbf; }
.PH { background-color: #99ff99; }
.CL { background-color: #548235; }
.AL { background-color: #ff33cc; }
.leave { background-color: #00b050; }

/* Corner marks */
.note {
    background-image: linear-gradient(to bottom left, #f00 50%, transparent 50%);
    background-position: right top;
    background-size: 6px 6px;
    background-repeat: no-repeat;
}

.warning {
    background-image: linear-gradient(to bottom right, #008000 50%, transparent 50%);
    background-position: left top;
    background-size: 6px 6px;
    background-repeat: no-repeat;
}

td.cursor {
    position: relative;
    overflow: visible;
}

.cursor::before {
    content: "";
    position: absolute;
    inset: -2px -1px -2px -2px;
    border: 2px solid #217346;
}

.cursor::after {
    content: "";
    position: absolute;
    right: -3px;
    bottom: -3px;
    width: 6px;
    height: 6px;
    background-color: #217346;
    border: solid #fff;
    border-width: 1px 0 0 1px;
}

.remark {
    padding-left: 2px;
    background-color: #a9d08e;
    font-weight: bold;
    line-height: 15px;
    text-align: left;
    vertical-align: top;
}

.remark span {
    color: #f00;
}

.freeze {
    position: absolute;
    left: 558px;
    top: 0;
    bottom: 0;
    width: 1px;
    background-color: #999;
}

/* Scroll Bars */
.vscroll {
    width: 21px;
    display: flex;
    flex-direction: column;
    padding: 4px 3px 0 3px;
}

.vscroll button, .hscroll button {
    flex: none;
    width: 15px;
    height: 15px;
    background-color: #fff;
    border: 1px solid #ababab;
}

.thumb {
    background-color: #fff;
    border: 1px solid #ababab;
}

.track {
    background-color: #dadada;
}

.vscroll .thumb {
    flex: 593;
}

.vscroll .track {
    flex: 127;
}

.sheet-tabs {
    flex: none;
    height: 28px;
    display: flex;
    border-bottom: 1px solid #c6c6c6;
}

.nav {
    width: 29px;
}

.nav:first-child {
    margin-left: 14px;
}

.tab {
    width: 43px;
    height: 25px;
    padding-bottom: 2px;
    color: #444;
    font-size: 14px;
    border-right: 1px solid #999;
}

.tab.active {
    width: 46px;
    margin-left: 28px;
    padding-bottom: 0;
    background-color: #fff;
    border-right: none;
    border-bottom: 2px solid #217346;
    color: #217346;
}

.add {
    margin-left: 33px;
}

.sheet-tabs .dots {
    margin: 8px 14px 0 auto;
}

.hscroll {
    width: 38%;
    display: flex;
    margin: 7px 20px 0 0;
}

.hscroll .thumb {
    flex: 656;
    height: 15px;
}

.hscroll .track {
    flex: 44;
    height: 15px;
}

/* Status Bar */
.status {
    flex: none;
    height: 22px;
    display: flex;
    align-items: center;
    padding: 0 9px 0 7px;
    background-color: #f3f3f3;
}

.ready {
    margin-right: auto;
}

.view {
    width: 38px;
    height: 22px;
}

.view.on {
    background-color: #c6c6c6;
}

.zoom-btn {
    width: 14px;
}

.view + .zoom-btn {
    margin-left: 1px;
}

.status input {
    appearance: none;
    width: 100px;
    height: 14px;
    background: linear-gradient(#999, #999) center / 100% 1px no-repeat, linear-gradient(#999, #999) center / 1px 6px no-repeat;
}

.status input::-webkit-slider-thumb {
    appearance: none;
    width: 5px;
    height: 11px;
    background-color: #555;
}

.percent {
    width: 32px;
    text-align: right;
}

/* Taskbar */
.taskbar {
    flex: none;
    height: 48px;
    display: grid;
    grid-template-columns: 1fr auto 1fr;
    align-items: center;
    background-color: #c9eddd;
    border-top: 1px solid #a9c4b8;
}

.weather {
    display: flex;
    align-items: center;
    gap: 6px;
    padding-left: 18px;
    padding-bottom: 2px;
    line-height: 15px;
}

.apps {
    display: flex;
    align-items: center;
    gap: 6px;
    padding-left: 2px;
}

.apps button {
    position: relative;
    width: 38px;
    height: 38px;
}

.apps .hot {
    background-color: #e4f6ee;
    border-radius: 4px;
}

.open::after {
    content: "";
    position: absolute;
    bottom: 0;
    width: 6px;
    height: 3px;
    border-radius: 2px;
    background-color: #6b877b;
}

.search {
    width: 218px;
    height: 31px;
    display: flex;
    align-items: center;
    gap: 10px;
    padding: 0 5px 0 10px;
    background-color: #eff9f4;
    border-bottom: 1px solid #a5c9b9;
    border-radius: 16px;
}

.search input {
    flex: 1;
    min-width: 0;
    font-size: 14px;
    outline: none;
}

.search input::placeholder {
    color: #555;
}

.tray {
    display: flex;
    align-items: center;
    justify-content: flex-end;
    padding-right: 19px;
    padding-bottom: 2px;
    font-size: 15px;
}

.tray svg {
    margin-right: 16px;
}

.tray span {
    margin-right: 23px;
}

.tray svg:nth-of-type(3) {
    margin-right: 6px;
}

.tray .volume {
    margin-right: 13px;
}

.clock {
    font-size: 12px;
    line-height: 16px;
    text-align: right;
}
```
FILE: script.js
```js
// column letters and widths; H and I are hidden, the last column fills the rest
const widths = [23, 122, 97, 55, 82, 100, 41, 39, 38, 39, 40, 40, 40, 40, 40, 39];
for (let i = 0; i < 23; i++) widths.push(40);
widths.push(55);

const letters = "A B C D E F G J K L M N O P Q R S T U V W X Y Z AA AB AC AD AE AF AG AH AI AJ AK AL AM AN AO AP".split(" ");

document.getElementById("cols").innerHTML =
    widths.map(w => `<col style="width: ${w}px">`).join("") + "<col>";

document.getElementById("letters").innerHTML = '<th class="corner"></th>' + letters.map(l => {
    const cls = l === "AO" ? "picked" : l === "AP" ? "last" : "";
    return `<th class="${cls}">${l}</th>`;
}).join("");

const OUT = '<td class="out"></td><td class="out"></td>';

// rows 3 and 4: day names and dates
const dayNames = ["Sun", "Mon", "Tue", "Wed", "Thu", "Fri", "Sat"];
let days = "";
let dates = "";
for (let i = 0; i < 31; i++) {
    const name = dayNames[i % 7];
    const date = i < 11 ? `${21 + i}-Dec` : `${i - 10}-Jan`;
    const holiday = date === "1-Jan" ? "holiday" : "";
    const weekend = name === "Sun" || name === "Sat" ? "weekend" : "";
    days += `<td class="day ${weekend} ${holiday}">${name}</td>`;
    dates += `<td class="date ${holiday}">${date}</td>`;
}
document.getElementById("days").innerHTML += days + OUT;
document.getElementById("dates").innerHTML += dates + OUT;

// row 5: rooms forecast, * = warning mark
const forecast = "11/3 11/8 38/33 22/16 47/41 26/19 24/19 14/8* 14/8* 14/8* 21/8* 11/7 33/28 16/7* 9/7 9/7 11/7 9/7 36/34 19/15 23/20 9/7 9/7 13/7* 9/7 9/7 9/7 24/22 10/7 10/7 10/7";
document.getElementById("forecast").innerHTML += forecast.split(" ").map(f =>
    `<td class="rooms ${f.endsWith("*") ? "warning" : ""}">${f.replace("*", "")}</td>`
).join("") + OUT;

// rows 6 - 19, * = cell note
const rows = [
    ["Lilith Zhong 钟晨晨", "000055", "AFOM", "17784914220", "AFOM", "76.5", "3", "O* O* G G G G O O G G G PH* O G G G G G G A O O G G G G G O O G O*"],
    "GSM (KWEAP)",
    ["Amy Chen 陈孔燕", "000027", "GSM", "17889722570", "GSM", "62.5", "2.5", "O* A A B B C C O O O B B B C C O O A A B B C C O O A A B B C C"],
    ["Henry Xie 谢沃明", "000171", "GSM", "15812907630", "GSM", "37.5", "1", "B C C O O O A B C C O PH O A A B B C C O O A A B B C C O O A A"],
    ["Belinda Wang 王萍", "000108", "GSS", "18212873443", "GSS TF GSM", "17", "2", "C O O A A B B C O O O A A B B C C O O A A B B C C O O A A B B"],
    ["Django Peng 彭琨皓", "000245", "GSM", "17623623040", "GSM", "16", "3.5", "A B B C C O O A B B C C C O O A A B B C C O O A A B B C C O O"],
    "Front Desk (KWEAP）",
    ["Lven Ding 丁相斌", "000277", "GSS", "18501377720", "GSS", "16", "0", "A A B B O O O O A A A F C C O O CL CL B B B C O O A A A A C C O"],
    ["Rose Peng 彭晓露", "000310", "GSA", "17685187531", "GSA", "0", "0", "A A B B B B O O A A A PH C C O O O* O* B B B C O O A A A A C C O"],
    ["Winni Wang 王晶晶", "000308", "GSA", "16684731209", "GSA", "0", "0", "O O A A B B B C O O B B B B C C O O O A A B C C O O B B B B C"],
    ["Alice Zhu 朱春艳", "000273", "GSA", "19110882240", "GSA", "16", "0", "F C O O A A F B C O O A A A O O A A A A O O O A B B C C CL B B"],
    ["Ethan Zhao 赵梓淇", "000036", "CON", "15521010536", "CON", "10", "2", "B B C AL AL A A A B B B PH O CL B B B B C C C"],
    ["Kimi Yuan 袁宇嵘鸣", "000285", "Trainee", "15180859212", "Trainee", "0", "0", "O* F F C C O O F B B O* PH* F F F F C C O O O A B B C C O O A A F"],
    ["Lena Tan 谭玲丽", "000279", "Trainee", "19117661732", "Trainee", "0", "0", "C O O F F C C O O C C C O O A A F F F F O O A F B B B B O A A"]
];

document.getElementById("staff").innerHTML = rows.map((row, i) => {
    const num = i + 6;
    if (typeof row === "string") {
        return `<tr class="line"><th>${num}</th><td colspan="38" class="team">${row}</td>${OUT}</tr>`;
    }
    const [name, id, position, phone, remark, ot, al, codes] = row;
    const shifts = codes.split(" ");
    let cells = shifts.map(s => {
        const code = s.replace("*", "");
        return `<td class="shift ${code} ${s.endsWith("*") ? "note" : ""}">${code}</td>`;
    }).join("");
    if (shifts.length < 31) {
        cells += `<td colspan="${31 - shifts.length}" class="leave"></td>`;
    }
    const selected = num === 17;
    return `<tr class="line ${selected ? "selected-row" : ""}">
        <th class="${selected ? "picked" : ""}">${num}</th>
        <td>${name}</td>
        <td class="warning">${id}</td>
        <td>${position}</td>
        <td>${phone}</td>
        <td class="role">${remark}</td>
        <td class="hours">${ot}</td>
        <td class="hours">${al}</td>
        ${cells}${selected ? '<td class="out cursor"></td><td class="out"></td>' : OUT}
    </tr>`;
}).join("");
```
